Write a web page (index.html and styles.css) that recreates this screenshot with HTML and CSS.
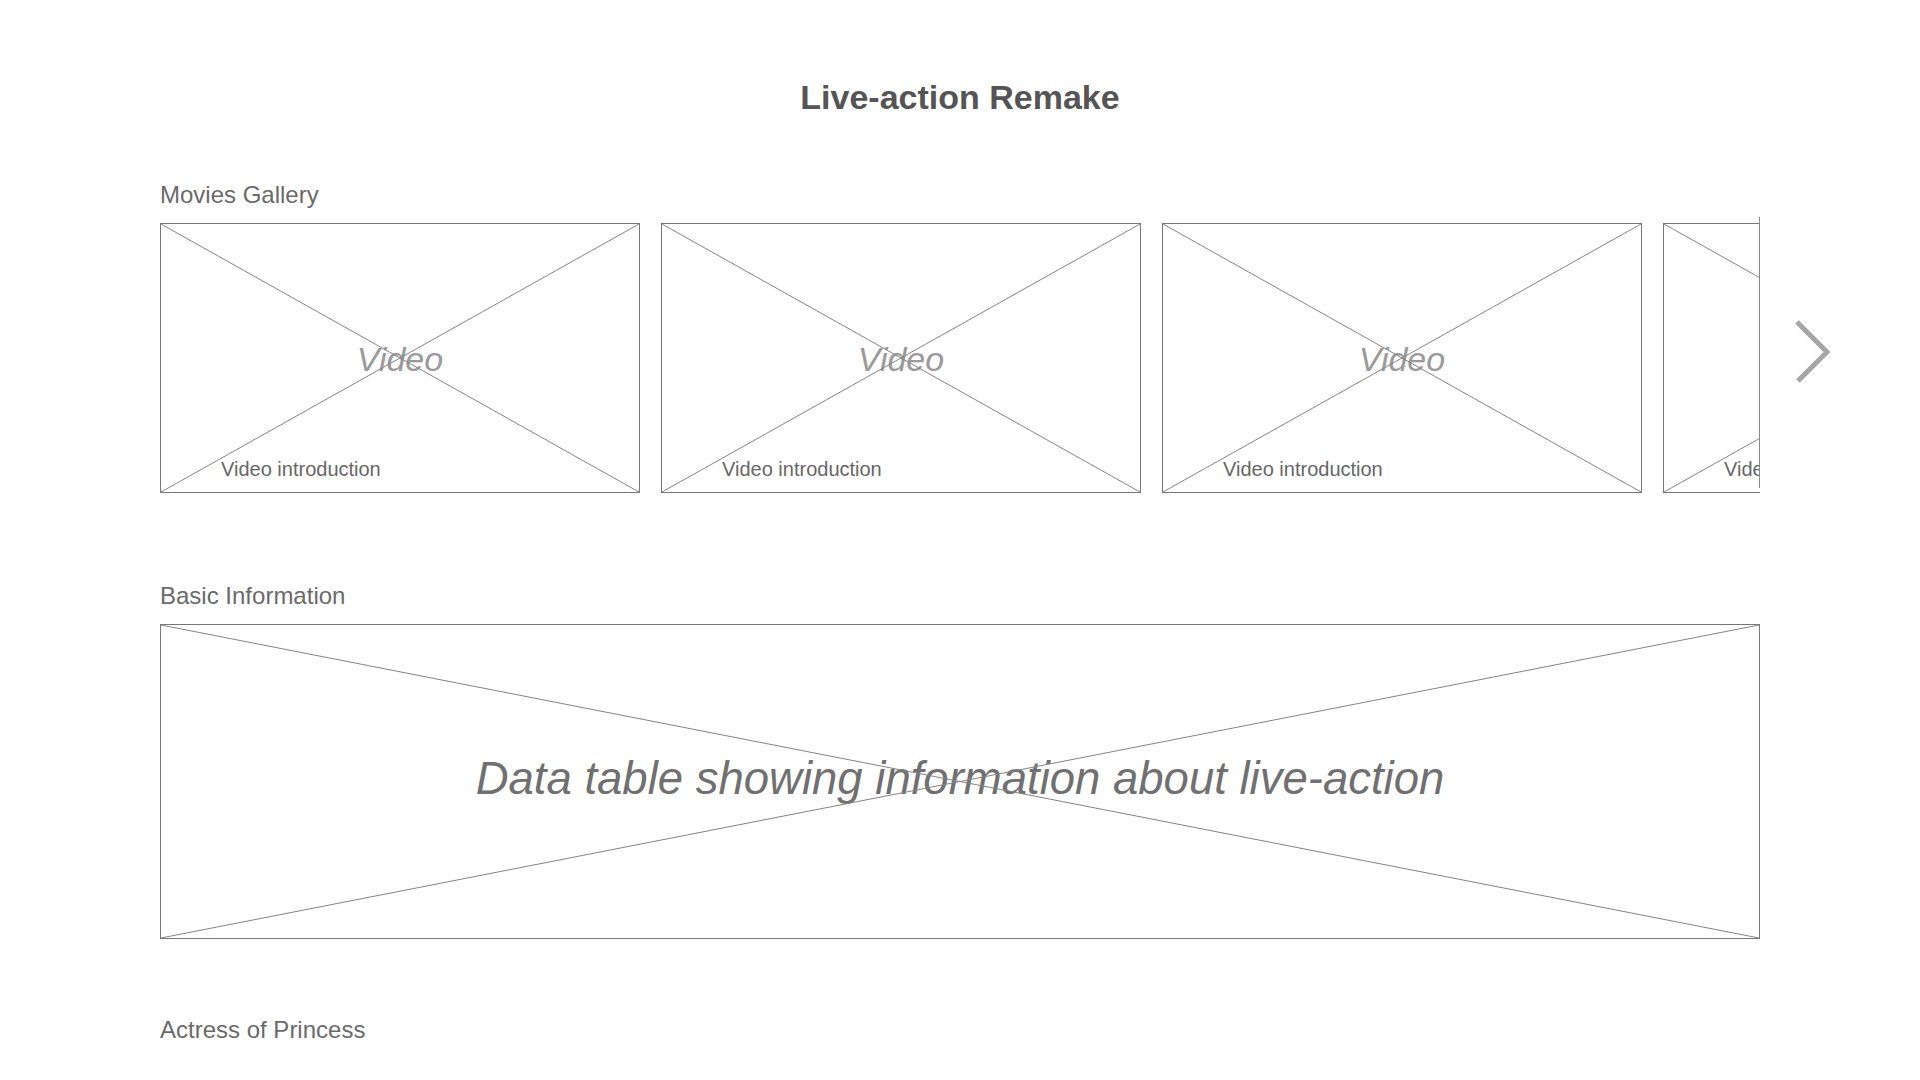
FILE: index.html
```html
<!DOCTYPE html>
<html lang="en">
<head>
  <meta charset="UTF-8">
  <meta name="viewport" content="width=device-width, initial-scale=1.0">
  <title>Live-action Remake</title>
  <link rel="stylesheet" href="styles.css">
</head>
<body>
  <div class="page">
    <h1 class="page-title">Live-action Remake</h1>

    <!-- Movies gallery -->
    <div class="section-label gallery-label">Movies Gallery</div>
    <div class="gallery-row">
      <div class="gallery-viewport">
        <div class="gallery-track">
          <div class="video-card">
            <svg class="cross" viewBox="0 0 100 100" preserveAspectRatio="none"><line x1="0" y1="0" x2="100" y2="100"/><line x1="100" y1="0" x2="0" y2="100"/></svg>
            <div class="video-title">Video</div>
            <div class="video-caption">Video introduction</div>
          </div>
          <div class="video-card">
            <svg class="cross" viewBox="0 0 100 100" preserveAspectRatio="none"><line x1="0" y1="0" x2="100" y2="100"/><line x1="100" y1="0" x2="0" y2="100"/></svg>
            <div class="video-title">Video</div>
            <div class="video-caption">Video introduction</div>
          </div>
          <div class="video-card">
            <svg class="cross" viewBox="0 0 100 100" preserveAspectRatio="none"><line x1="0" y1="0" x2="100" y2="100"/><line x1="100" y1="0" x2="0" y2="100"/></svg>
            <div class="video-title">Video</div>
            <div class="video-caption">Video introduction</div>
          </div>
          <div class="video-card">
            <svg class="cross" viewBox="0 0 100 100" preserveAspectRatio="none"><line x1="0" y1="0" x2="100" y2="100"/><line x1="100" y1="0" x2="0" y2="100"/></svg>
            <div class="video-title">Video</div>
            <div class="video-caption">Video introduction</div>
          </div>
        </div>
      </div>
      <svg class="gallery-next" width="36" height="66" viewBox="0 0 36 66"><polyline points="2,3 32,33 3,62"/></svg>
    </div>

    <!-- Basic information -->
    <div class="section-label info-label">Basic Information</div>
    <div class="data-box">
      <svg class="cross" viewBox="0 0 100 100" preserveAspectRatio="none"><line x1="0" y1="0" x2="100" y2="100"/><line x1="100" y1="0" x2="0" y2="100"/></svg>
      <div class="data-text">Data table showing information about live-action</div>
    </div>

    <div class="section-label actress-label">Actress of Princess</div>
  </div>
</body>
</html>
```

FILE: styles.css
```css
* {
  margin: 0;
  padding: 0;
  box-sizing: border-box;
  font-family: "Liberation Sans", Arial, sans-serif;
}

body {
  background-color: #fff;
  color: #666;
}

.page {
  padding: 77px 160px 0 160px;
}

.page-title {
  font-size: 34px;
  line-height: 40px;
  font-weight: bold;
  color: #555;
  text-align: center;
  width: 1600px;
}

.section-label {
  font-size: 24px;
  line-height: 28px;
  color: #6a6a6a;
}

.gallery-label {
  margin-top: 64px;
  margin-bottom: 8px;
}

/* Gallery */
.gallery-row {
  display: flex;
}

.gallery-viewport {
  position: relative;
  width: 1600px;
  padding-top: 6px;
  overflow: hidden;
  flex: none;
}

.gallery-viewport::after {
  content: "";
  position: absolute;
  top: 0;
  right: 0;
  bottom: 5px;
  width: 1px;
  background-color: #8a8a8a;
}

.gallery-track {
  display: flex;
  gap: 21px;
}

.video-card {
  position: relative;
  flex: none;
  width: 480px;
  height: 270px;
  border: 1px solid #777;
  display: grid;
  grid-template-areas: "stack";
}

.cross {
  position: absolute;
  top: 0;
  left: 0;
  width: 100%;
  height: 100%;
}

.cross line {
  stroke: #848484;
  stroke-width: 1;
  vector-effect: non-scaling-stroke;
}

.video-title {
  grid-area: stack;
  align-self: center;
  justify-self: center;
  font-size: 34px;
  font-style: italic;
  color: #9a9a9a;
  line-height: 40px;
  margin-top: 2px;
}

.video-caption {
  grid-area: stack;
  align-self: end;
  justify-self: start;
  font-size: 20px;
  line-height: 24px;
  color: #666;
  padding: 0 0 11px 60px;
}

.gallery-next {
  flex: none;
  margin-left: 35px;
  margin-top: 102px;
}

.gallery-next polyline {
  fill: none;
  stroke: #a6a6a6;
  stroke-width: 5;
}

/* Basic information */
.info-label {
  margin-top: 89px;
  margin-bottom: 14px;
}

.data-box {
  position: relative;
  width: 1600px;
  height: 315px;
  border: 1px solid #777;
  display: flex;
  align-items: center;
  justify-content: center;
}

.data-text {
  font-size: 45.5px;
  line-height: 52px;
  font-style: italic;
  color: #707070;
  margin-top: -6px;
}

.actress-label {
  margin-top: 77px;
}
```
